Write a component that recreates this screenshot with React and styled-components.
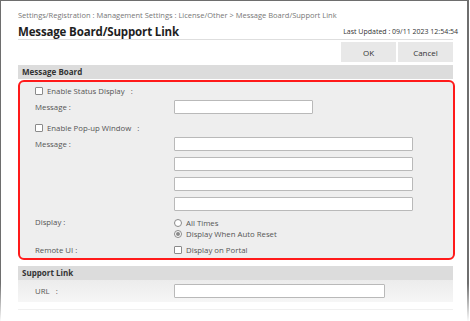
import React from 'react'
import styled, { createGlobalStyle } from 'styled-components'

const GlobalStyle = createGlobalStyle`
  html, body {
    margin: 0;
    padding: 0;
    background: #ffffff;
  }
  body {
    font-family: "Open Sans", "Noto Sans", sans-serif;
    color: #444;
  }
  * {
    box-sizing: border-box;
  }
`

const Frame = styled.div`
  width: 469px;
  height: 321px;
  border-style: solid;
  border-width: 1px 2px 0 1px;
  border-image: linear-gradient(to bottom, #6e6e6e 88%, #ffffff 100%) 1;
  overflow: hidden;
`

const Page = styled.div`
  padding: 8px 14px 0 17px;
`

const Breadcrumb = styled.div`
  font-size: 7.5px;
  line-height: 12px;
  color: #777;
  white-space: nowrap;
`

const TitleRow = styled.div`
  display: flex;
  justify-content: space-between;
  align-items: flex-end;
  height: 19px;
  border-bottom: 1px solid #dedede;
`

const Title = styled.h1`
  margin: 0;
  font-size: 11.5px;
  line-height: 14px;
  font-weight: 700;
  letter-spacing: -0.15px;
  color: #1e1e1e;
`

const Updated = styled.div`
  font-size: 7px;
  line-height: 14px;
  color: #333;
  margin-right: -5px;
`

const ButtonRow = styled.div`
  display: flex;
  justify-content: flex-end;
  gap: 2px;
  margin-top: 2px;
`

const Button = styled.button`
  width: 55px;
  height: 20px;
  padding: 0;
  border: none;
  background: #e8e8e8;
  font-family: inherit;
  font-size: 8px;
  color: #333;
`

const SectionHeader = styled.div`
  margin-top: ${p => p.$gap}px;
  height: 14px;
  padding-left: 4px;
  background: #dcdcdc;
  font-size: 8px;
  line-height: 14px;
  font-weight: 700;
  color: #333;
`

const Highlight = styled.div`
  margin: 1px -2px 0 0;
  padding: 0 0 2px 15px;
  border: 2px solid #ff1a1a;
  border-radius: 6px;
  background: #eeeeee;
`

const Row = styled.div`
  display: grid;
  grid-template-columns: 139px 1fr;
  align-items: ${p => p.$align || 'center'};
  min-height: ${p => p.$h || 14}px;
  margin-top: ${p => p.$mt || 0}px;
`

const Label = styled.div`
  font-size: 7.8px;
  line-height: ${p => p.$lh || 14}px;
  color: #555;
  white-space: pre;
`

const CheckLabel = styled.label`
  display: flex;
  align-items: center;
  gap: 4px;
  height: ${p => p.$h || 14}px;
  font-size: 7.8px;
  color: #555;
  white-space: pre;
`

const Box = styled.span`
  width: 8px;
  height: 8px;
  border: 1px solid #8a8a8a;
  border-radius: 1px;
  background: #fff;
  flex: none;
`

const Radio = styled.span`
  position: relative;
  width: 8px;
  height: 8px;
  border: 1px solid #8a8a8a;
  border-radius: 50%;
  background: #fff;
  flex: none;

  &::after {
    content: '';
    display: ${p => (p.$on ? 'block' : 'none')};
    position: absolute;
    inset: 1px;
    border-radius: 50%;
    background: #8a8a8a;
  }
`

const Input = styled.div`
  width: ${p => p.$w}px;
  height: 14px;
  background: #fff;
  border: 1px solid #b9b9b9;
  border-radius: 1px;
`

const Stack = styled.div`
  display: flex;
  flex-direction: column;
  gap: ${p => p.$gap}px;
`

const UrlRow = styled.div`
  display: grid;
  grid-template-columns: 139px 1fr;
  align-items: center;
  height: 22px;
  padding-left: 17px;
  background: linear-gradient(to bottom, #ececec, #f6f6f6);
`

const Footer = styled.div`
  margin-top: 7px;
  border-top: 1px solid #f0f0f0;
  padding: 3px 0 0 3px;
`

function TopIcon() {
  return (
    <svg width="9" height="8" viewBox="0 0 9 8">
      <rect x="0.5" y="0.5" width="8" height="1" fill="#c8c8c8" />
      <path d="M4.5 2.5 L8 6 H6 V7.5 H3 V6 H1 Z" fill="#c8c8c8" />
    </svg>
  )
}

export default function App() {
  return (
    <>
      <GlobalStyle />
      <Frame>
        <Page>
          <Breadcrumb>
            Settings/Registration : Management Settings : License/Other &gt; Message Board/Support Link
          </Breadcrumb>
          <TitleRow>
            <Title>Message Board/Support Link</Title>
            <Updated>Last Updated : 09/11 2023 12:54:54</Updated>
          </TitleRow>
          <ButtonRow>
            <Button>OK</Button>
            <Button>Cancel</Button>
          </ButtonRow>

          <SectionHeader $gap={3}>Message Board</SectionHeader>
          <Highlight>
            <CheckLabel $h={18}>
              <Box />
              {'Enable Status Display   :'}
            </CheckLabel>
            <Row>
              <Label>Message :</Label>
              <Input $w={139} />
            </Row>
            <CheckLabel $h={19} style={{ marginTop: 4 }}>
              <Box />
              {'Enable Pop-up Window   :'}
            </CheckLabel>
            <Row $align="start">
              <Label>Message :</Label>
              <Stack $gap={6}>
                <Input $w={239} />
                <Input $w={239} />
                <Input $w={239} />
                <Input $w={239} />
              </Stack>
            </Row>
            <Row $align="start" $mt={6}>
              <Label $lh={11}>Display :</Label>
              <Stack $gap={0}>
                <CheckLabel $h={11}>
                  <Radio />
                  All Times
                </CheckLabel>
                <CheckLabel $h={11}>
                  <Radio $on />
                  Display When Auto Reset
                </CheckLabel>
              </Stack>
            </Row>
            <Row $mt={5} $h={12}>
              <Label $lh={12}>Remote UI :</Label>
              <CheckLabel $h={12}>
                <Box />
                Display on Portal
              </CheckLabel>
            </Row>
          </Highlight>

          <SectionHeader $gap={6}>Support Link</SectionHeader>
          <UrlRow>
            <Label>{'URL   :'}</Label>
            <Input $w={211} />
          </UrlRow>
          <Footer>
            <TopIcon />
          </Footer>
        </Page>
      </Frame>
    </>
  )
}
